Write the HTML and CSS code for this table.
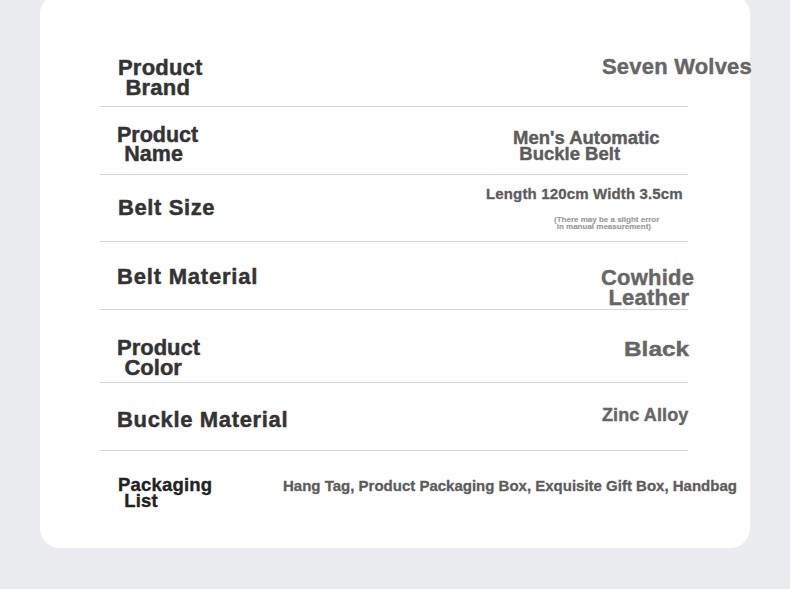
FILE: index.html
```html
<!DOCTYPE html>
<html lang="en">
<head>
<meta charset="utf-8">
<title>Product Specs</title>
<link rel="stylesheet" href="styles.css">
</head>
<body>
<div class="page">
  <div class="card">
    <div class="row r1">
      <div class="label lab-1"><span class="ln">Product</span><span class="ln ind">Brand</span></div>
      <div class="value val-1"><span class="ln">Seven Wolves</span></div>
    </div>
    <div class="row r2">
      <div class="label lab-2"><span class="ln">Product</span><span class="ln ind">Name</span></div>
      <div class="value val-2"><span class="ln">Men's Automatic</span><span class="ln ind">Buckle Belt</span></div>
    </div>
    <div class="row r3">
      <div class="label lab-3"><span class="ln">Belt Size</span></div>
      <div class="value val-3">
        <span class="ln">Length 120cm Width 3.5cm</span>
        <span class="note"><span class="ln">(There may be a slight error</span><span class="ln ind">in manual measurement)</span></span>
      </div>
    </div>
    <div class="row r4">
      <div class="label lab-4"><span class="ln">Belt Material</span></div>
      <div class="value val-4"><span class="ln">Cowhide</span><span class="ln ind">Leather</span></div>
    </div>
    <div class="row r5">
      <div class="label lab-5"><span class="ln">Product</span><span class="ln ind">Color</span></div>
      <div class="value val-5"><span class="ln">Black</span></div>
    </div>
    <div class="row r6">
      <div class="label lab-6"><span class="ln">Buckle Material</span></div>
      <div class="value val-6"><span class="ln">Zinc Alloy</span></div>
    </div>
    <div class="row r7">
      <div class="label lab-7"><span class="ln">Packaging</span><span class="ln ind">List</span></div>
      <div class="value val-7"><span class="ln">Hang Tag, Product Packaging Box, Exquisite Gift Box, Handbag</span></div>
    </div>
  </div>
</div>
</body>
</html>
```
FILE: styles.css
```css
html, body {
  margin: 0;
  padding: 0;
}
body {
  background: #ebecf0;
  font-family: "Liberation Sans", Arial, sans-serif;
  font-weight: bold;
  width: 790px;
  height: 589px;
  overflow: hidden;
}
.page {
  padding: 0 40px;
}
.card {
  margin-top: -6px;
  height: 554px;
  box-sizing: border-box;
  background: #ffffff;
  border-radius: 20px;
  padding: 46px 62px 0 60px;
}
.row {
  display: flex;
  align-items: flex-start;
  border-bottom: 1px solid #d6d6d6;
  white-space: nowrap;
}
.r1 { height: 66px; }
.r2 { height: 67px; }
.r3 { height: 66px; }
.r4 { height: 67px; }
.r5 { height: 72px; }
.r6 { height: 67px; }
.r7 { height: 97px; border-bottom: none; }

.ln {
  display: block;
}
.ind {
  padding-left: 0.34em;
}

.label {
  flex: none;
  width: 166px;
  margin-left: 18px;
  color: #333333;
  font-size: 22px;
  line-height: 20px;
  -webkit-text-stroke: 0.45px #333333;
}
.value {
  flex: none;
  color: #666666;
  font-size: 22px;
  line-height: 20px;
  -webkit-text-stroke: 0.4px currentColor;
}

.lab-1 { margin-top: 18px; letter-spacing: 0.2px; }
.val-1 { margin-top: 17px; margin-left: 318px; letter-spacing: 0.2px; }

.lab-2 { margin-top: 19px; font-size: 21.5px; line-height: 19px; margin-left: 17px; width: 167px; }
.val-2 { margin-top: 23px; margin-left: 229px; font-size: 18.5px; line-height: 16px; color: #5c5c5c; }

.lab-3 { margin-top: 23px; letter-spacing: 0.6px; }
.val-3 { margin-top: 10px; margin-left: 202px; font-size: 15px; line-height: 17px; letter-spacing: 0.15px; color: #5c5c5c; -webkit-text-stroke: 0.3px #5c5c5c; }
.note {
  display: block;
  margin-top: 14px;
  margin-left: 68px;
  font-size: 8px;
  line-height: 7px;
  letter-spacing: 0;
  color: #9a9a9a;
  -webkit-text-stroke: 0.15px #9a9a9a;
}

.lab-4 { margin-top: 25px; letter-spacing: 0.8px; margin-left: 17px; width: 167px; }
.val-4 { margin-top: 26px; margin-left: 317px; letter-spacing: 0.2px; }

.lab-5 { margin-top: 28px; margin-left: 17px; width: 167px; }
.val-5 { margin-top: 29px; margin-left: 340px; font-size: 20px; }
.val-5 .ln {
  display: inline-block;
  transform: scaleX(1.22);
  transform-origin: left center;
}

.lab-6 { margin-top: 27px; letter-spacing: 0.65px; margin-left: 17px; width: 167px; }
.val-6 { margin-top: 22px; margin-left: 318px; font-size: 18px; letter-spacing: 0.1px; }

.lab-7 { margin-top: 26px; font-size: 18.5px; line-height: 16px; width: 165px; color: #222222; -webkit-text-stroke: 0.35px #222222; letter-spacing: 0.2px; }
.val-7 { margin-top: 26px; margin-left: 0; font-size: 15px; line-height: 17px; color: #5c5c5c; -webkit-text-stroke: 0.3px #5c5c5c; }
```
